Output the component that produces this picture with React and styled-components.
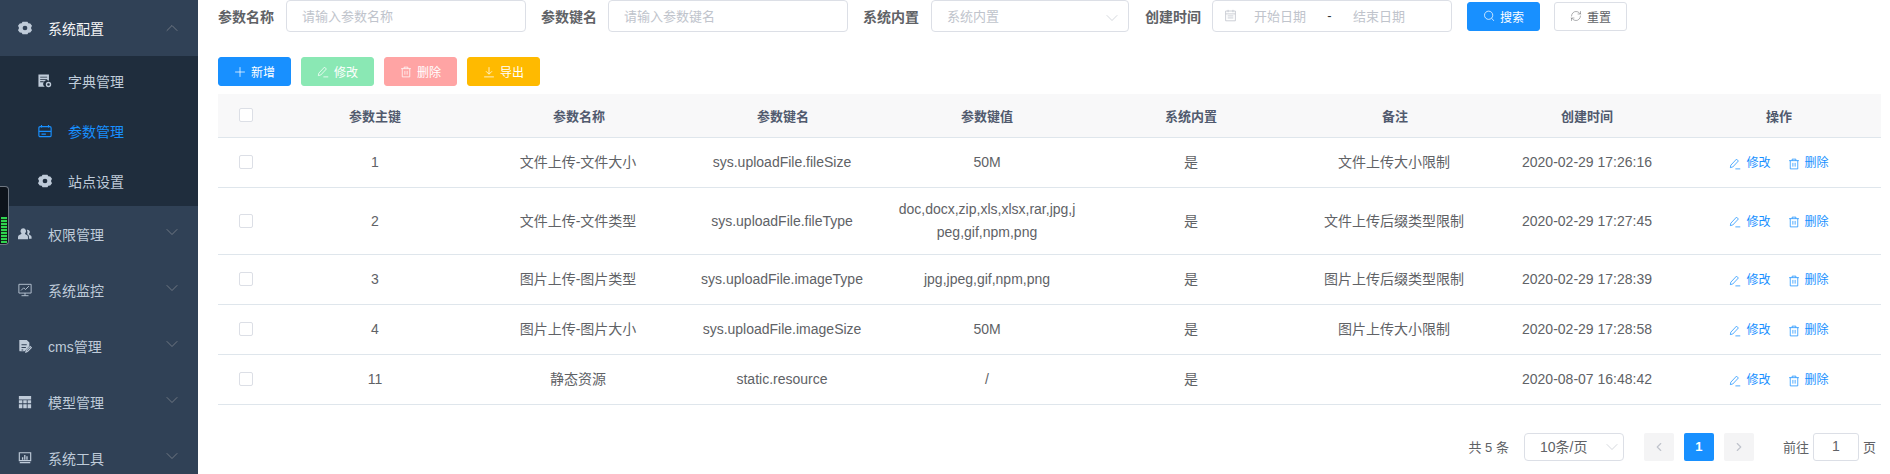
import styled, { createGlobalStyle } from 'styled-components';
import { ChevronDown, ChevronUp, ChevronLeft, ChevronRight, RefreshCw } from 'lucide-react';

const GlobalStyle = createGlobalStyle`
    html, body {
        margin: 0;
        height: 100%;
        overflow: hidden;
        background: #fff;
    }
    body, input, button {
        font-family: "Liberation Sans", "Noto Sans CJK SC", sans-serif;
    }
    #root {
        height: 100%;
    }
`

const Layout = styled.div`
    display: flex;
    height: 474px;
    overflow: hidden;
`

const Sidebar = styled.aside`
    width: 198px;
    flex-shrink: 0;
    background: #304156;
    overflow: hidden;
`

const MenuHeader = styled.div`
    display: flex;
    align-items: center;
    height: 56px;
    padding: 0 16px 0 18px;
    font-size: 14px;
    color: ${(p) => (p.$open ? '#f4f4f5' : '#bfcbd9')};

    svg.menu-icon {
        width: 14px;
        height: 14px;
        margin-right: 16px;
        color: #bfcbd9;
    }

    span {
        flex: 1;
    }

    svg.arrow {
        color: #909399;
        margin-bottom: ${(p) => (p.$open ? 0 : 4)}px;
    }
`

const SubMenu = styled.div`
    background: #1f2d3d;
`

const SubItem = styled.div`
    display: flex;
    align-items: center;
    height: 50px;
    padding-left: 38px;
    font-size: 14px;
    color: ${(p) => (p.$active ? '#1890ff' : '#bfcbd9')};

    svg {
        width: 14px;
        height: 14px;
        margin-right: 16px;
    }
`

const VolumeWidget = styled.div`
    position: fixed;
    left: 0;
    top: 186px;
    width: 6px;
    height: 56px;
    padding: 0 1px 1px;
    border: 1px solid #6f7782;
    border-left: none;
    border-radius: 0 4px 4px 0;
    background: #0d131b;
    display: flex;
    align-items: flex-end;

    div {
        width: 100%;
        height: 26px;
        background: repeating-linear-gradient(180deg, #2fd44f 0 2px, #123018 2px 3px);
    }
`

const Main = styled.main`
    flex: 1;
    min-width: 0;
    padding: 0 9px 0 20px;
`

const SearchForm = styled.form`
    display: flex;
    align-items: center;
    height: 32px;
    margin-bottom: 25px;
`

const FieldLabel = styled.label`
    font-size: 14px;
    font-weight: 700;
    color: #606266;
    margin-right: ${(p) => p.$gap || 11}px;
    white-space: nowrap;
`

const TextInput = styled.input`
    box-sizing: border-box;
    width: 240px;
    height: 32px;
    margin-right: 15px;
    padding: 0 15px;
    border: 1px solid #dcdfe6;
    border-radius: 4px;
    font-size: 13px;
    color: #606266;
    outline: none;

    &::placeholder {
        color: #c0c4cc;
    }
`

const SelectBox = styled.div`
    box-sizing: border-box;
    display: flex;
    align-items: center;
    justify-content: space-between;
    width: ${(p) => p.$width}px;
    height: ${(p) => p.$height}px;
    margin-right: ${(p) => p.$gap}px;
    padding: 0 ${(p) => p.$pad}px 2px 15px;
    border: 1px solid #dcdfe6;
    border-radius: 4px;
    font-size: ${(p) => p.$fontSize}px;
    color: ${(p) => p.$color};

    svg {
        color: #c0c4cc;
        margin-top: ${(p) => p.$drop}px;
    }
`

const DateRange = styled.div`
    box-sizing: border-box;
    display: flex;
    align-items: center;
    width: 240px;
    height: 32px;
    margin-right: 15px;
    padding: 0 0 2px 11px;
    border: 1px solid #dcdfe6;
    border-radius: 4px;
    font-size: 13px;
    color: #c0c4cc;

    svg {
        width: 13px;
        height: 13px;
        margin-right: 17px;
    }

    i {
        font-style: normal;
        color: #303133;
        width: 47px;
        text-align: center;
    }
`

const Button = styled.button`
    box-sizing: border-box;
    display: inline-flex;
    align-items: center;
    justify-content: center;
    gap: 5px;
    width: 73px;
    height: 29px;
    padding: 0;
    border: 1px solid ${(p) => p.$border || p.$bg};
    border-radius: 3px;
    background: ${(p) => p.$bg};
    color: ${(p) => p.$color || '#fff'};
    font-size: 12px;

    svg {
        width: 12px;
        height: 12px;
    }
`

const Toolbar = styled.div`
    display: flex;
    gap: 10px;
    margin-bottom: 8px;
`

const ButtonGroup = styled.div`
    display: flex;
    gap: 14px;
`

const Table = styled.table`
    width: 100%;
    table-layout: fixed;
    border-collapse: separate;
    border-spacing: 0;
    font-size: 14px;
    color: #606266;
    text-align: center;

    th {
        height: 44px;
        box-sizing: border-box;
        padding: 0 10px;
        background: #f8f8f9;
        border-bottom: 1px solid #dfe6ec;
        font-size: 13px;
        font-weight: 700;
        color: #515a6e;
    }

    td {
        height: 50px;
        box-sizing: border-box;
        padding: 10px;
        border-bottom: 1px solid #dfe6ec;
        line-height: 23px;
        word-break: break-all;
    }
`

const TextCell = styled.td`
    && {
        padding-right: 12px;
    }
`

const Checkbox = styled.span`
    display: block;
    box-sizing: border-box;
    width: 14px;
    height: 14px;
    margin: -1px auto 0;
    border: 1px solid #dcdfe6;
    border-radius: 2px;
    background: #fff;
`

const Actions = styled.div`
    display: flex;
    justify-content: center;
    gap: 17px;
    margin-top: 2px;
`

const ActionLink = styled.a`
    display: inline-flex;
    align-items: center;
    gap: 5px;
    font-size: 12px;
    color: #1890ff;

    svg {
        width: 12px;
        height: 12px;
    }
`

const Pagination = styled.div`
    display: flex;
    align-items: center;
    justify-content: flex-end;
    height: 28px;
    margin-top: 28px;
    padding-right: 5px;
    font-size: 13px;
    color: #606266;
`

const Total = styled.span`
    margin: 0 15px 2px 0;
`

const PageButton = styled.span`
    box-sizing: border-box;
    display: flex;
    align-items: center;
    justify-content: center;
    width: 30px;
    height: 28px;
    margin-right: 10px;
    padding-bottom: 1px;
    border-radius: 2px;
    background: ${(p) => (p.$active ? '#1890ff' : '#f4f4f5')};
    color: ${(p) => (p.$active ? '#fff' : '#c0c4cc')};
    font-weight: 700;
`

const JumpLabel = styled.span`
    margin: 0 4px 2px 19px;
`

const JumpInput = styled.span`
    box-sizing: border-box;
    display: flex;
    align-items: center;
    justify-content: center;
    width: 46px;
    height: 28px;
    margin-right: 4px;
    padding-bottom: 2px;
    border: 1px solid #dcdfe6;
    border-radius: 3px;
    font-size: 14px;
`

const PageSuffix = styled.span`
    margin-bottom: 2px;
`

const Svg = ({ children, ...rest }) => (
    <svg viewBox="0 0 16 16" fill="none" stroke="currentColor" {...rest}>{children}</svg>
);

const GearIcon = (props) => (
    <Svg {...props}>
        <path
            fill="currentColor"
            stroke="none"
            fillRule="evenodd"
            d="M5.2 .8h5.6l1 1.900 2.200.2L16 5.400l-1.200 2.600L16 10.600l-2 2.500-2.200.2-1 1.900H5.200l-1-1.900-2.200-.2L0 10.600 1.200 8 0 5.400l2-2.500 2.200-.2zM8 5.300a2.700 2.700 0 1 0 0 5.400 2.700 2.700 0 0 0 0-5.400z"
        />
    </Svg>
);

const DictIcon = (props) => (
    <Svg {...props}>
        <path fill="currentColor" stroke="none" fillRule="evenodd" d="M.5 .5h12v7.300a4 4 0 0 0-4.700 6.700H.5zM2.500 3v1h8V3zM2.500 5.700v1h8v-1zM2.500 8.400v1h4v-1z" />
        <circle cx="12" cy="12" r="2.300" strokeWidth="1.600" />
    </Svg>
);

const ParamIcon = (props) => (
    <Svg {...props} strokeWidth="1.300">
        <rect x="1" y="3" width="14" height="11.500" rx="1.500" />
        <path d="M1 8.500h14M4 1v3M12 1v3M4 11.500h5" />
    </Svg>
);

const PeopleIcon = (props) => (
    <Svg {...props}>
        <path fill="currentColor" stroke="none" d="M6 1.500a3.200 3.200 0 0 1 2 5.700c0 1 .4 1.300 2 2 1 .5 1.400 1.300 1.400 2.300v2.500H0v-2.500c0-1 .5-1.800 1.500-2.300 1.600-.7 2.500-1 2.500-2A3.200 3.200 0 0 1 6 1.500z" />
        <path fill="currentColor" stroke="none" d="M11 3a2.600 2.600 0 0 1 1.500 4.700c0 .8.300 1 1.500 1.700.9.500 1.500 1.200 1.500 2v2h-3v-2c0-1.300-.8-2.300-2-3 0-.8.300-1.500.3-2.400 0-1-.3-2-.8-2.800z" />
    </Svg>
);

const MonitorChartIcon = (props) => (
    <Svg {...props}>
        <path d="M1 1.500h14v10H1zM8 11.500v3M4 14.500h8" />
        <path d="M3.500 8.500l3-3 2 2 4-4" />
    </Svg>
);

const DocEditIcon = (props) => (
    <Svg {...props}>
        <path fill="currentColor" stroke="none" fillRule="evenodd" d="M1.500 1H10l3 3v4l-5.500 6H2.500a1 1 0 0 1-1-1zM4 6v1.200h6V6zM4 9v1.200h5V9zM4 12v1h2v-1z" />
        <path strokeWidth="1.300" d="M9 15l.5-2 4.500-4.500 1.300 1.300-4.500 4.500z" />
    </Svg>
);

const TableIcon = (props) => (
    <Svg {...props}>
        <path fill="currentColor" stroke="none" d="M1 1h14v4H1zM1 6h4v3.500H1zM6 6h4v3.500H6zM11 6h4v3.500h-4zM1 10.500h4V15H1zM6 10.500h4V15H6zM11 10.500h4V15h-4z" />
    </Svg>
);

const MonitorBarsIcon = (props) => (
    <Svg {...props}>
        <path strokeWidth="1.300" d="M1.500 2h13v9h-13z" />
        <path fill="currentColor" stroke="none" d="M4.500 7h1.500v3H4.500zM7 4.500h1.500V10H7zM9.500 6H11v4H9.500zM2 12.500h12V14H2z" />
    </Svg>
);

const PlusIcon = (props) => (
    <Svg {...props}><path d="M8 1.500v13M1.500 8h13" /></Svg>
);

const EditIcon = (props) => (
    <Svg {...props}>
        <path d="M10 1.500l2.500 2.500-7.500 8-3.200.8.600-3.200zM8.500 14.500h6.500" />
    </Svg>
);

const TrashIcon = (props) => (
    <Svg {...props}>
        <path d="M1.500 3.500h13M5.500 3.500v-2h5v2M3 3.500v11h10v-11M6.500 6.500v5M9.500 6.500v5" />
    </Svg>
);

const DownloadIcon = (props) => (
    <Svg {...props}>
        <path d="M8 1.500v9M4 7l4 4 4-4M1.500 14.500h13" />
    </Svg>
);

const SearchIcon = (props) => (
    <Svg {...props}>
        <circle cx="7.500" cy="7" r="5.500" />
        <path d="M11.500 11l3 3.500" />
    </Svg>
);

const CalendarIcon = (props) => (
    <Svg {...props}>
        <path d="M2 2.500h12v12H2zM5 1v3M11 1v3M2 6h12M4.500 8.500h7M4.500 11h7" />
    </Svg>
);

const menuTop = { icon: GearIcon, label: '系统配置' };

const subItems = [
    { icon: DictIcon, label: '字典管理' },
    { icon: ParamIcon, label: '参数管理', active: true },
    { icon: GearIcon, label: '站点设置' },
];

const menuRest = [
    { icon: PeopleIcon, label: '权限管理' },
    { icon: MonitorChartIcon, label: '系统监控' },
    { icon: DocEditIcon, label: 'cms管理' },
    { icon: TableIcon, label: '模型管理' },
    { icon: MonitorBarsIcon, label: '系统工具' },
];

const columns = [55, 204, 204, 204, 204, 204, 204, 180, 204];

const headers = ['参数主键', '参数名称', '参数键名', '参数键值', '系统内置', '备注', '创建时间', '操作'];

const rows = [
    { id: 1, name: '文件上传-文件大小', key: 'sys.uploadFile.fileSize', value: '50M', remark: '文件上传大小限制', time: '2020-02-29 17:26:16' },
    { id: 2, name: '文件上传-文件类型', key: 'sys.uploadFile.fileType', value: 'doc,docx,zip,xls,xlsx,rar,jpg,jpeg,gif,npm,png', remark: '文件上传后缀类型限制', time: '2020-02-29 17:27:45' },
    { id: 3, name: '图片上传-图片类型', key: 'sys.uploadFile.imageType', value: 'jpg,jpeg,gif,npm,png', remark: '图片上传后缀类型限制', time: '2020-02-29 17:28:39' },
    { id: 4, name: '图片上传-图片大小', key: 'sys.uploadFile.imageSize', value: '50M', remark: '图片上传大小限制', time: '2020-02-29 17:28:58' },
    { id: 11, name: '静态资源', key: 'static.resource', value: '/', remark: '', time: '2020-08-07 16:48:42' },
];

const App = () => {
    const TopIcon = menuTop.icon;

    return (
        <>
            <GlobalStyle />
            <Layout>
                <Sidebar>
                    <MenuHeader $open>
                        <TopIcon className="menu-icon" />
                        <span>{menuTop.label}</span>
                        <ChevronUp className="arrow" size={20} strokeWidth={0.8} />
                    </MenuHeader>
                    <SubMenu>
                        {subItems.map(({ icon: Icon, label, active }) => (
                            <SubItem key={label} $active={active}>
                                <Icon />
                                {label}
                            </SubItem>
                        ))}
                    </SubMenu>
                    {menuRest.map(({ icon: Icon, label }) => (
                        <MenuHeader key={label}>
                            <Icon className="menu-icon" />
                            <span>{label}</span>
                            <ChevronDown className="arrow" size={20} strokeWidth={0.8} />
                        </MenuHeader>
                    ))}
                </Sidebar>
                <VolumeWidget><div /></VolumeWidget>
                <Main>
                    <SearchForm>
                        <FieldLabel $gap={12}>参数名称</FieldLabel>
                        <TextInput placeholder="请输入参数名称" />
                        <FieldLabel>参数键名</FieldLabel>
                        <TextInput placeholder="请输入参数键名" />
                        <FieldLabel $gap={12}>系统内置</FieldLabel>
                        <SelectBox $width={198} $height={32} $gap={16} $pad={6} $color="#c0c4cc" $fontSize={13} $drop={5}>
                            系统内置
                            <ChevronDown size={20} strokeWidth={0.8} />
                        </SelectBox>
                        <FieldLabel>创建时间</FieldLabel>
                        <DateRange>
                            <CalendarIcon />
                            开始日期
                            <i>-</i>
                            结束日期
                        </DateRange>
                        <ButtonGroup>
                            <Button type="button" $bg="#1890ff"><SearchIcon />搜索</Button>
                            <Button type="button" $bg="#fff" $border="#dcdfe6" $color="#606266"><RefreshCw strokeWidth={1} />重置</Button>
                        </ButtonGroup>
                    </SearchForm>
                    <Toolbar>
                        <Button type="button" $bg="#1890ff"><PlusIcon />新增</Button>
                        <Button type="button" $bg="#8ae8b4"><EditIcon />修改</Button>
                        <Button type="button" $bg="#ffa4a4"><TrashIcon />删除</Button>
                        <Button type="button" $bg="#ffba00"><DownloadIcon />导出</Button>
                    </Toolbar>
                    <Table>
                        <colgroup>
                            {columns.map((w, i) => <col key={i} width={w} />)}
                        </colgroup>
                        <thead>
                            <tr>
                                <th><Checkbox /></th>
                                {headers.map((h) => <th key={h}>{h}</th>)}
                            </tr>
                        </thead>
                        <tbody>
                            {rows.map((r) => (
                                <tr key={r.id}>
                                    <td><Checkbox /></td>
                                    <td>{r.id}</td>
                                    <TextCell>{r.name}</TextCell>
                                    <TextCell>{r.key}</TextCell>
                                    <td>{r.value}</td>
                                    <td>是</td>
                                    <TextCell>{r.remark}</TextCell>
                                    <td>{r.time}</td>
                                    <td>
                                        <Actions>
                                            <ActionLink><EditIcon />修改</ActionLink>
                                            <ActionLink><TrashIcon />删除</ActionLink>
                                        </Actions>
                                    </td>
                                </tr>
                            ))}
                        </tbody>
                    </Table>
                    <Pagination>
                        <Total>共 5 条</Total>
                        <SelectBox $width={100} $height={28} $gap={20} $pad={1} $color="#606266" $fontSize={14} $drop={1}>
                            10条/页
                            <ChevronDown size={20} strokeWidth={0.8} />
                        </SelectBox>
                        <PageButton><ChevronLeft size={14} strokeWidth={2} /></PageButton>
                        <PageButton $active>1</PageButton>
                        <PageButton><ChevronRight size={14} strokeWidth={2} /></PageButton>
                        <JumpLabel>前往</JumpLabel>
                        <JumpInput>1</JumpInput>
                        <PageSuffix>页</PageSuffix>
                    </Pagination>
                </Main>
            </Layout>
        </>
    );
};

export default App;
